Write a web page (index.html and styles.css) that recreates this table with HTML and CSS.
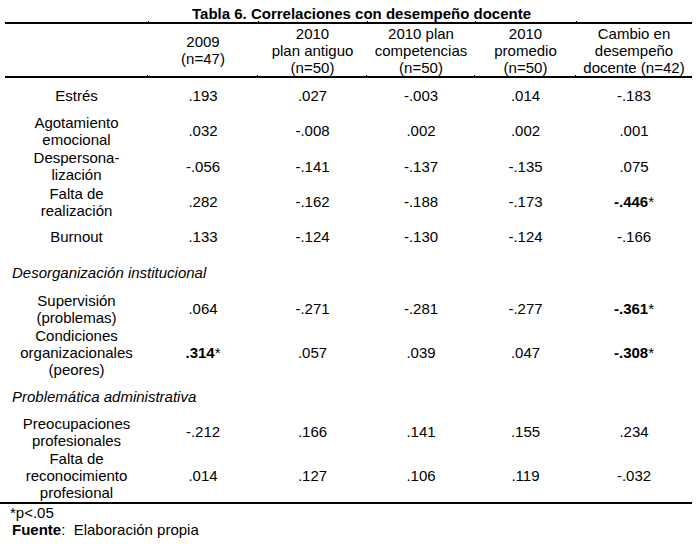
FILE: index.html
```html
<!DOCTYPE html>
<html lang="es">
<head>
<meta charset="utf-8">
<title>Tabla 6</title>
<link rel="stylesheet" href="styles.css">
</head>
<body>
<div class="page">
  <div class="title">Tabla 6. Correlaciones con desempeño docente</div>
  <table class="corr">
    <colgroup>
      <col class="c0"><col class="c1"><col class="c2"><col class="c3"><col class="c4"><col class="c5">
    </colgroup>
    <thead>
      <tr class="head">
        <th></th>
        <th>2009<br>(n=47)</th>
        <th>2010<br>plan antiguo<br>(n=50)</th>
        <th>2010 plan<br>competencias<br>(n=50)</th>
        <th>2010<br>promedio<br>(n=50)</th>
        <th class="last">Cambio en<br>desempeño<br>docente (n=42)</th>
      </tr>
    </thead>
    <tbody>
      <tr class="r35"><td>Estrés</td><td>.193</td><td>.027</td><td>-.003</td><td>.014</td><td>-.183</td></tr>
      <tr class="r35"><td>Agotamiento<br>emocional</td><td>.032</td><td>-.008</td><td>.002</td><td>.002</td><td>.001</td></tr>
      <tr class="r36"><td>Despersona-<br>lización</td><td>-.056</td><td>-.141</td><td>-.137</td><td>-.135</td><td>.075</td></tr>
      <tr class="r35"><td>Falta de<br>realización</td><td>.282</td><td>-.162</td><td>-.188</td><td>-.173</td><td><b>-.446</b>*</td></tr>
      <tr class="r35"><td>Burnout</td><td>.133</td><td>-.124</td><td>-.130</td><td>-.124</td><td>-.166</td></tr>
      <tr class="r37 section"><td colspan="6">Desorganización institucional</td></tr>
      <tr class="r35"><td>Supervisión<br>(problemas)</td><td>.064</td><td>-.271</td><td>-.281</td><td>-.277</td><td><b>-.361</b>*</td></tr>
      <tr class="r52"><td>Condiciones<br>organizacionales<br>(peores)</td><td><b>.314</b>*</td><td>.057</td><td>.039</td><td>.047</td><td><b>-.308</b>*</td></tr>
      <tr class="r36 section"><td colspan="6">Problemática administrativa</td></tr>
      <tr class="r35"><td>Preocupaciones<br>profesionales</td><td>-.212</td><td>.166</td><td>.141</td><td>.155</td><td>.234</td></tr>
      <tr class="r53"><td>Falta de<br>reconocimiento<br>profesional</td><td>.014</td><td>.127</td><td>.106</td><td>.119</td><td>-.032</td></tr>
    </tbody>
  </table>
  <div class="notes">
    <div class="note-sig">*p&lt;.05</div>
    <div class="note-src"><b>Fuente</b>:&nbsp; Elaboración propia</div>
  </div>
</div>
</body>
</html>
```

FILE: styles.css
```css
html, body {
  margin: 0;
  padding: 0;
  background: #ffffff;
}

body {
  font-family: "Liberation Sans", Arial, sans-serif;
  font-size: 15px;
  line-height: 17px;
  color: #000000;
}

.page {
  width: 692px;
}

.title {
  font-weight: bold;
  text-align: center;
  padding: 5px 0 0 31px;
  height: 17px;
  background:
    linear-gradient(#000, #000) 148px 21px / 1px 1px no-repeat,
    linear-gradient(#000, #000) 258px 21px / 1px 1px no-repeat,
    linear-gradient(#000, #000) 367px 21px / 1px 1px no-repeat,
    linear-gradient(#000, #000) 475px 21px / 1px 1px no-repeat,
    linear-gradient(#000, #000) 576px 21px / 1px 1px no-repeat;
}

.corr {
  margin-left: 5px;
  width: 687px;
  table-layout: fixed;
  border-collapse: separate;
  border-spacing: 0;
}

.c0 { width: 143px; }
.c1 { width: 110px; }
.c2 { width: 109px; }
.c3 { width: 108px; }
.c4 { width: 101px; }
.c5 { width: 116px; }

.corr th,
.corr td {
  padding: 0;
  text-align: center;
  vertical-align: middle;
  white-space: nowrap;
}

.corr th {
  font-weight: normal;
  border-top: 2px solid #000;
  border-bottom: 2px solid #000;
  background: linear-gradient(#000, #000) right bottom / 1px 1px no-repeat;
}

.corr th.last {
  background: none;
}

.head { height: 56px; }
.r35 { height: 35px; }
.r36 { height: 36px; }
.r37 { height: 37px; }
.r52 { height: 52px; }
.r53 { height: 53px; }

.section td {
  text-align: left;
  font-style: italic;
  padding-left: 7px;
}

.corr td b {
  font-weight: bold;
}

.notes {
  border-top: 2px solid #000;
}

.note-sig {
  padding-left: 10px;
}

.note-src {
  padding-left: 12px;
}

.note-src b {
  font-weight: bold;
}
```
